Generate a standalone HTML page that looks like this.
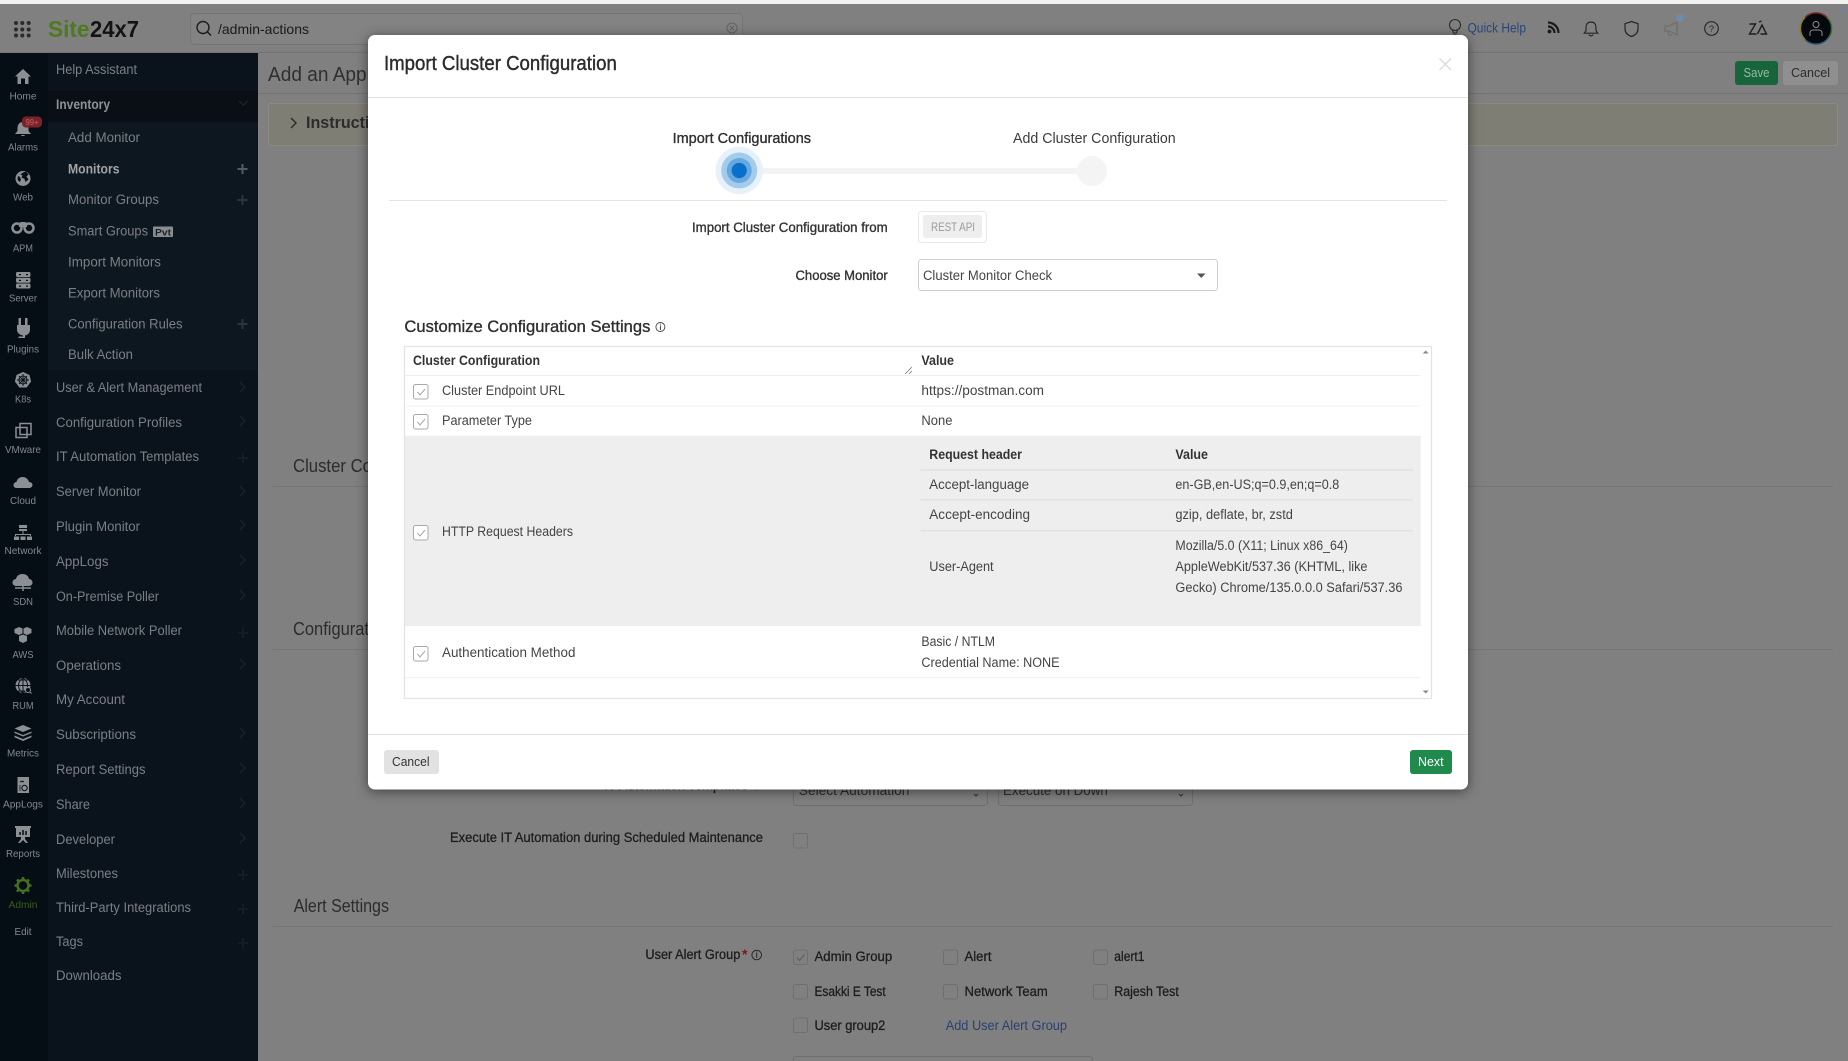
<!DOCTYPE html>
<html lang="en">
<head>
<meta charset="utf-8">
<title>Import Cluster Configuration</title>
<style>
html,body{margin:0;padding:0;width:1848px;height:1061px;overflow:hidden;background:#808080}
svg{display:block;position:absolute;left:0;top:0}
text{font-family:"Liberation Sans",sans-serif;white-space:pre}
.l{font-size:10.5px;fill:#84888b;text-anchor:middle}
.m{font-size:13.5px;fill:#7b7f83}
.mb{font-size:13.5px;fill:#a2a4a6;font-weight:bold}
.b{font-size:13.5px;fill:#1d1d1d;stroke:#1d1d1d;stroke-width:.3px}
.h{font-size:18px;fill:#2c2c2c}
.t{font-size:13.5px;fill:#444}
.tb{font-size:13.5px;fill:#333;font-weight:bold}
.tm{font-size:13.5px;fill:#333;stroke:#333;stroke-width:.35px}
.cb{fill:none;stroke:#6f6f6f;stroke-width:1}
.mcb{fill:#fff;stroke:#a9a9a9;stroke-width:1}
.ck{fill:none;stroke:#a5a5a5;stroke-width:1}
.ch{fill:none;stroke:#1b252e;stroke-width:1.2}
.pl{fill:none;stroke:#151c23;stroke-width:2}
.ic{fill:#8c9094}
.ics{fill:none;stroke:#8c9094;stroke-width:1.5}
.d{fill:none;stroke:#0a131c;stroke-width:1}
</style>
</head>
<body>
<svg width="1848" height="1061" viewBox="0 0 1848 1061" xmlns="http://www.w3.org/2000/svg">
<!-- page -->
<rect width="1848" height="1061" fill="#808080"/>
<rect width="1848" height="4" fill="#f2f2f2"/>
<rect y="52" x="0" width="1848" height="1" fill="#747474"/>

<!-- top bar -->
<g fill="#2b2b2b">
<circle cx="16" cy="23" r="2"/><circle cx="22.3" cy="23" r="2"/><circle cx="28.7" cy="23" r="2"/>
<circle cx="16" cy="29.5" r="2"/><circle cx="22.3" cy="29.5" r="2"/><circle cx="28.7" cy="29.5" r="2"/>
<circle cx="16" cy="35.5" r="2"/><circle cx="22.3" cy="35.5" r="2"/><circle cx="28.7" cy="35.5" r="2"/>
</g>
<text x="48" y="37" textLength="41.5" lengthAdjust="spacingAndGlyphs" style="font-size:23.5px;font-weight:bold;fill:#4d7a1f">Site</text>
<text x="90" y="37" textLength="49" lengthAdjust="spacingAndGlyphs" style="font-size:23.5px;font-weight:bold;fill:#131313">24x7</text>
<rect x="190.5" y="13.5" width="552" height="31" rx="4" fill="#838383" stroke="#747474"/>
<circle cx="203" cy="27.5" r="6" fill="none" stroke="#1d1d1d" stroke-width="1.4"/><path d="M207.5 32l3.5 3.5" stroke="#1d1d1d" stroke-width="1.5" fill="none"/>
<text x="218" y="34" textLength="91" lengthAdjust="spacingAndGlyphs" style="font-size:14px;fill:#1a1a1a">/admin-actions</text>
<circle cx="732" cy="28" r="5" fill="none" stroke="#646464"/><path d="M730 26l4 4M734 26l-4 4" stroke="#646464" fill="none"/>

<circle cx="1455" cy="25" r="5.5" fill="none" stroke="#2b2b2b" stroke-width="1.1"/><path d="M1452.5 30l1 3h3l1-3M1453.5 35h3" fill="none" stroke="#2b2b2b" stroke-width="1.1"/>
<text x="1467.5" y="32.5" textLength="58.5" lengthAdjust="spacingAndGlyphs" style="font-size:13.5px;fill:#2a4578">Quick Help</text>
<circle cx="1549.5" cy="31.5" r="1.9" fill="#1a1a1a"/><path d="M1548 26.5a6.500 6.500 0 0 1 6.500 6.500M1548 22.5a10.500 10.500 0 0 1 10.500 10.500" fill="none" stroke="#1a1a1a" stroke-width="2.2"/>
<path d="M1591 22c-3.600 0-5 2.600-5 5.600v3.200l-1.800 2.400h13.600l-1.800-2.400v-3.200c0-3-1.400-5.600-5-5.600zM1589 34.500c.5 1.800 3.500 1.800 4 0" fill="none" stroke="#262626" stroke-width="1.2"/>
<path d="M1631.500 21.500l6.500 2.200v5c0 4-2.800 6.500-6.500 7.800-3.700-1.300-6.500-3.800-6.500-7.800v-5z" fill="none" stroke="#262626" stroke-width="1.2"/>
<path d="M1665 26h4l8-4v13l-8-4h-4zM1668 31l1 4h3" fill="none" stroke="#6e6e6e" stroke-width="1.3"/>
<circle cx="1680" cy="18" r="4" fill="#6f8ba6"/>
<circle cx="1711.500" cy="28.500" r="6.800" fill="none" stroke="#2a2a2a" stroke-width="1.2"/>
<text x="1711.500" y="32" style="font-size:9.5px;fill:#2a2a2a;text-anchor:middle">?</text>
<path d="M1749.500 24h6l-6 10h7M1757.500 34l4.500-9 4.500 9h-6M1759 22l2.500-1" fill="none" stroke="#1e1e1e" stroke-width="1.4"/>
<circle cx="1816" cy="28.500" r="15.500" fill="#05090d"/>
<path d="M1805 17.500a15.500 15.500 0 0 1 22 0" fill="none" stroke="#7d2a2a" stroke-width="1.5"/>
<path d="M1827 17.500a15.500 15.500 0 0 1 0 22" fill="none" stroke="#3e6a3e" stroke-width="1.5"/>
<path d="M1827 39.500a15.500 15.500 0 0 1-22 0" fill="none" stroke="#2e5a85" stroke-width="1.5"/>
<path d="M1805 39.500a15.500 15.500 0 0 1 0-22" fill="none" stroke="#8a7a2a" stroke-width="1.5"/>
<circle cx="1816" cy="24.500" r="3" fill="none" stroke="#8f8f8f" stroke-width="1"/>
<path d="M1810 36v-3c0-2 1.500-3 3-3h6c1.500 0 3 1 3 3v3" fill="none" stroke="#8f8f8f" stroke-width="1"/>
<path d="M1842 8l3.500 4h-7z" fill="#6e84a4"/>

<!-- main content behind overlay -->
<rect x="258" y="93" width="1590" height="1" fill="#747474"/>
<text x="268" y="81" textLength="158" lengthAdjust="spacingAndGlyphs" style="font-size:20px;fill:#2f2f2f">Add an Application</text>
<rect x="1735" y="61" width="43" height="24" rx="3" fill="#17653a"/>
<text x="1743.500" y="77" textLength="26" lengthAdjust="spacingAndGlyphs" style="font-size:13px;fill:#98b9a6">Save</text>
<rect x="1783" y="61" width="55" height="24" rx="3" fill="#8f8f8f"/>
<text x="1791" y="77" textLength="39" lengthAdjust="spacingAndGlyphs" style="font-size:13px;fill:#2d2d2d">Cancel</text>
<rect x="268.500" y="103.500" width="1569" height="42" rx="3" fill="#7f7e75" stroke="#8b8b85"/>
<path d="M291 118l5 5-5 5" fill="none" stroke="#2a2a2a" stroke-width="1.4"/>
<text x="306" y="128" textLength="92" lengthAdjust="spacingAndGlyphs" style="font-size:16.5px;font-weight:bold;fill:#2c2c2c">Instructions</text>

<text x="293" y="472" textLength="157" lengthAdjust="spacingAndGlyphs" class="h">Cluster Configuration</text>
<rect x="273" y="486" width="1560" height="1" fill="#747474"/>
<text x="293" y="635" textLength="98" lengthAdjust="spacingAndGlyphs" class="h">Configuration</text>
<rect x="273" y="649" width="1560" height="1" fill="#747474"/>

<text x="604.400" y="790" textLength="143.600" lengthAdjust="spacingAndGlyphs" class="b">IT Automation Templates</text>
<circle cx="756.700" cy="786" r="4.500" class="cb"/>
<rect x="793.500" y="772" width="194" height="33.500" rx="3" class="cb"/>
<text x="798.800" y="795" textLength="110.600" lengthAdjust="spacingAndGlyphs" style="font-size:13.5px;fill:#2c2c2c">Select Automation</text>
<path d="M974 794l2 2 2-2" fill="none" stroke="#333" stroke-width="1"/>
<rect x="998.500" y="772" width="194" height="33.500" rx="3" class="cb"/>
<text x="1003" y="795" textLength="104.800" lengthAdjust="spacingAndGlyphs" style="font-size:13.5px;fill:#2c2c2c">Execute on Down</text>
<path d="M1179 794l2 2 2-2" fill="none" stroke="#333" stroke-width="1"/>

<text x="450" y="842" textLength="313" lengthAdjust="spacingAndGlyphs" class="b">Execute IT Automation during Scheduled Maintenance</text>
<rect x="793.500" y="833.500" width="14" height="14.500" rx="2" class="cb"/>

<text x="293.700" y="912" textLength="95.300" lengthAdjust="spacingAndGlyphs" class="h">Alert Settings</text>
<rect x="273" y="926" width="1560" height="1" fill="#747474"/>

<text x="645.400" y="959" textLength="94.900" lengthAdjust="spacingAndGlyphs" class="b">User Alert Group</text>
<text x="742" y="959" style="font-size:14px;font-weight:bold;fill:#7a1616">*</text>
<circle cx="756.700" cy="955" r="4.800" fill="none" stroke="#2a2a2a"/><path d="M756.700 953v5M756.700 951.500v1" stroke="#2a2a2a" fill="none"/>

<rect x="793.500" y="950" width="14" height="14.500" rx="2" class="cb"/><path d="M797 957.500l2.500 3 5-6" fill="none" stroke="#5c5c5c" stroke-width="1"/>
<text x="814.500" y="961" textLength="77.700" lengthAdjust="spacingAndGlyphs" class="b">Admin Group</text>
<rect x="943.500" y="950" width="14" height="14.500" rx="2" class="cb"/>
<text x="964.500" y="961" textLength="27" lengthAdjust="spacingAndGlyphs" class="b">Alert</text>
<rect x="1093.500" y="950" width="14" height="14.500" rx="2" class="cb"/>
<text x="1114.300" y="961" textLength="30.200" lengthAdjust="spacingAndGlyphs" class="b">alert1</text>

<rect x="793.500" y="984.500" width="14" height="14.500" rx="2" class="cb"/>
<text x="814.500" y="996" textLength="71.200" lengthAdjust="spacingAndGlyphs" class="b">Esakki E Test</text>
<rect x="943.500" y="984.500" width="14" height="14.500" rx="2" class="cb"/>
<text x="964.500" y="996" textLength="83.300" lengthAdjust="spacingAndGlyphs" class="b">Network Team</text>
<rect x="1093.500" y="984.500" width="14" height="14.500" rx="2" class="cb"/>
<text x="1114.300" y="996" textLength="64.500" lengthAdjust="spacingAndGlyphs" class="b">Rajesh Test</text>

<rect x="793.500" y="1018" width="14" height="14.500" rx="2" class="cb"/>
<text x="814.500" y="1030" textLength="70.800" lengthAdjust="spacingAndGlyphs" class="b">User group2</text>
<text x="945.700" y="1030" textLength="121.300" lengthAdjust="spacingAndGlyphs" style="font-size:13.5px;fill:#2a4070">Add User Alert Group</text>
<rect x="793.500" y="1056.500" width="299" height="30" rx="3" class="cb"/>

<!-- sidebar -->
<rect x="0" y="53" width="48" height="1008" fill="#050d15"/>
<rect x="48" y="53" width="210" height="1008" fill="#0a131c"/>
<rect x="48" y="91" width="210" height="31" fill="#0a0f15"/>
<rect x="48" y="122" width="210" height="248" fill="#0d1720"/>

<!-- sidebar icons -->
<path class="ic" d="M23 69l8 7.500h-2.500V84H25v-5.500h-4V84h-3.500v-7.500H15z"/>
<path class="ic" d="M23 122c-3.600 0-5.500 2.600-5.500 6v3l-2.500 3h16l-2.500-3v-3c0-3.400-1.900-6-5.500-6zM21 135c.5 1.500 3.500 1.500 4 0z"/>
<rect x="22" y="116.500" width="20" height="11" rx="4" fill="#7d2227"/>
<text x="32" y="125" textLength="13" lengthAdjust="spacingAndGlyphs" style="font-size:8px;fill:#b5686c;text-anchor:middle">99+</text>
<circle class="ic" cx="23" cy="178.500" r="7.500"/>
<path fill="#050d15" d="M23 172.500l3-1 2.500 3-2 2 2 3-3 2.500-1-3-3-1.500 1-2-2-1zM18 176l2 1 1 3-1.500 2-2-2.500z"/>
<circle cx="17" cy="228" r="4.500" fill="none" stroke="#8c9094" stroke-width="2.500"/><circle cx="29" cy="228" r="4.500" fill="none" stroke="#8c9094" stroke-width="2.500"/>
<path class="ic" d="M19 223l2-1h4l2 1v4h-8z"/>
<g class="ic"><rect x="16" y="272" width="14.500" height="5" rx="1.500"/><rect x="16" y="277.800" width="14.500" height="5" rx="1.500"/><rect x="16" y="283.500" width="14.500" height="5" rx="1.500"/></g>
<g fill="#050d15"><rect x="19" y="274" width="2" height="1.200"/><rect x="26" y="274" width="2" height="1.200"/><rect x="19" y="279.800" width="2" height="1.200"/><rect x="26" y="279.800" width="2" height="1.200"/><rect x="19" y="285.500" width="2" height="1.200"/><rect x="26" y="285.500" width="2" height="1.200"/></g>
<path class="ic" d="M18.500 318h2.500v7h4v-7h2.500v7H30v5c0 3-2.500 5-5 5.500V338h-6.500v-1.500H23v-1c-3-.5-6-2.500-6-5.500v-5h1.500z"/>
<path class="ic" d="M23 372l6.500 3 1.600 6.500-4.500 6h-7.200l-4.500-6 1.600-6.500z"/>
<circle cx="23" cy="380" r="4" class="d"/><path class="d" d="M23 374v12M17 380h12M19 376l8 8M27 376l-8 8"/>
<path class="ics" d="M20 423.500h11v11H20zM16 427.500h11v10H16z"/>
<path class="ic" d="M19.500 488h-3c-2 0-3-1.400-3-3s1.500-3 3-3c.5-3 3-5 6-5 3.500 0 6 2.500 6.500 5 2 0 3.500 1.300 3.500 3s-1.500 3-3.500 3z"/>
<path class="ic" d="M19 525h8v3h-8zM19 529h8v2h-8zM22.500 531h1v3h-1zM15 534h16v1H15zM15 535h1v1h-1zM30 535h1v1h-1zM14 536.500h5v3.500h-5zM20.500 536.500h5v3.500h-5zM27 536.500h5v3.500h-5z"/>
<path class="ic" d="M20 586h-4c-2 0-3.500-1.500-3.500-3.500s1.600-3.300 3.500-3.500c.5-3 3-5 6.500-5s6 2 6.500 5c2 .2 3.500 1.500 3.500 3.500s-1.500 3.500-3.500 3.500z"/>
<path class="ics" d="M23 586v5M15 588h16" stroke-width="1"/>
<path class="ic" d="M14.500 629l4.500-2 3.500 1.500v5l-3.500 1.500-4.500-2zM23.500 628.500l3.500-1.500 4.500 2v4l-4.500 2-3.500-1.500zM19 636l4-1.500 4 1.500v5l-4 2-4-2z"/>
<circle class="ic" cx="23" cy="685.500" r="7.500"/>
<path class="d" d="M15.500 685.500h15M23 678v15M18 680h10M18 691h10M23 678c-6 4-6 11 0 15M23 678c6 4 6 11 0 15"/>
<circle cx="28" cy="690" r="2.500" fill="#050d15" stroke="#8c9094"/><path d="M30 692l1.500 1.500" stroke="#8c9094"/>
<path class="ic" d="M23 725l8.500 3.500-8.500 3.500-8.500-3.500zM14.500 731.500l8.500 3.500 8.500-3.500v1.500l-8.500 3.500-8.500-3.500zM14.500 735.500l8.500 3.500 8.500-3.500v1.800l-8.500 3.700-8.500-3.700z"/>
<rect class="ic" x="17.500" y="777" width="11.500" height="16"/>
<circle cx="24.500" cy="788" r="2.700" fill="none" stroke="#050d15"/><path d="M19 786h2M19 788h2M19 790h2M20 781l1 1 1-1 1 1 1-1" fill="none" stroke="#050d15" stroke-width=".8"/>
<path class="ic" d="M15 826h16v2h-1v9h-5v2l3 4h-2l-3-3-3 3h-2l3-4v-2h-5v-9h-1z"/>
<path fill="none" stroke="#050d15" stroke-width="1.500" d="M20 835v-3M23 835v-5M26 835v-4"/>
<circle cx="23" cy="885.500" r="5.500" fill="none" stroke="#44701e" stroke-width="2.500"/>
<path fill="none" stroke="#44701e" stroke-width="2.600" d="M23 877v3.500M23 890.500v3.500M14.500 885.500H18M28 885.500h3.500M17 879.500l2.500 2.500M26.500 889l2.500 2.500M29 879.500L26.500 882M19.500 889L17 891.500"/>

<text class="l" x="23" y="99.300" textLength="27" lengthAdjust="spacingAndGlyphs">Home</text>
<text class="l" x="23" y="150.300" textLength="30" lengthAdjust="spacingAndGlyphs">Alarms</text>
<text class="l" x="23" y="200.300" textLength="20" lengthAdjust="spacingAndGlyphs">Web</text>
<text class="l" x="23" y="251.300" textLength="20" lengthAdjust="spacingAndGlyphs">APM</text>
<text class="l" x="23" y="301.300" textLength="28" lengthAdjust="spacingAndGlyphs">Server</text>
<text class="l" x="23" y="352.300" textLength="32" lengthAdjust="spacingAndGlyphs">Plugins</text>
<text class="l" x="23" y="402.300" textLength="16" lengthAdjust="spacingAndGlyphs">K8s</text>
<text class="l" x="23" y="453" textLength="36" lengthAdjust="spacingAndGlyphs">VMware</text>
<text class="l" x="23" y="504" textLength="26" lengthAdjust="spacingAndGlyphs">Cloud</text>
<text class="l" x="23" y="554" textLength="37" lengthAdjust="spacingAndGlyphs">Network</text>
<text class="l" x="23" y="605" textLength="20" lengthAdjust="spacingAndGlyphs">SDN</text>
<text class="l" x="23" y="658" textLength="21" lengthAdjust="spacingAndGlyphs">AWS</text>
<text class="l" x="23" y="709" textLength="21" lengthAdjust="spacingAndGlyphs">RUM</text>
<text class="l" x="23" y="756.500" textLength="32" lengthAdjust="spacingAndGlyphs">Metrics</text>
<text class="l" x="23" y="807.500" textLength="40" lengthAdjust="spacingAndGlyphs">AppLogs</text>
<text class="l" x="23" y="857" textLength="34" lengthAdjust="spacingAndGlyphs">Reports</text>
<text class="l" x="23" y="908" textLength="29" lengthAdjust="spacingAndGlyphs" style="fill:#3c5c1c">Admin</text>
<text class="l" x="23" y="935" textLength="17" lengthAdjust="spacingAndGlyphs">Edit</text>

<!-- sidebar menu -->
<text class="m" x="56" y="74" textLength="81" lengthAdjust="spacingAndGlyphs">Help Assistant</text>
<text class="mb" x="56" y="109" textLength="54" lengthAdjust="spacingAndGlyphs" style="fill:#8f9194">Inventory</text>
<text class="m" x="68" y="142" textLength="72" lengthAdjust="spacingAndGlyphs">Add Monitor</text>
<text class="mb" x="68" y="173.500" textLength="51.500" lengthAdjust="spacingAndGlyphs">Monitors</text>
<text class="m" x="68" y="204" textLength="91" lengthAdjust="spacingAndGlyphs">Monitor Groups</text>
<text class="m" x="68" y="235.500" textLength="80" lengthAdjust="spacingAndGlyphs">Smart Groups</text>
<rect x="153" y="226.500" width="20" height="10.500" rx="1" fill="#8a8d90"/>
<text x="155" y="235.500" textLength="16" lengthAdjust="spacingAndGlyphs" style="font-size:9.5px;font-weight:bold;fill:#1b2127">Pvt</text>
<text class="m" x="68" y="266.500" textLength="93" lengthAdjust="spacingAndGlyphs">Import Monitors</text>
<text class="m" x="68" y="297.500" textLength="92" lengthAdjust="spacingAndGlyphs">Export Monitors</text>
<text class="m" x="68" y="328.500" textLength="114.500" lengthAdjust="spacingAndGlyphs">Configuration Rules</text>
<text class="m" x="68" y="359" textLength="65" lengthAdjust="spacingAndGlyphs">Bulk Action</text>
<text class="m" x="56" y="392" textLength="146" lengthAdjust="spacingAndGlyphs">User &amp; Alert Management</text>
<text class="m" x="56" y="427" textLength="126" lengthAdjust="spacingAndGlyphs">Configuration Profiles</text>
<text class="m" x="56" y="461" textLength="143" lengthAdjust="spacingAndGlyphs">IT Automation Templates</text>
<text class="m" x="56" y="496" textLength="85" lengthAdjust="spacingAndGlyphs">Server Monitor</text>
<text class="m" x="56" y="531" textLength="84" lengthAdjust="spacingAndGlyphs">Plugin Monitor</text>
<text class="m" x="56" y="566" textLength="52.500" lengthAdjust="spacingAndGlyphs">AppLogs</text>
<text class="m" x="56" y="601" textLength="103" lengthAdjust="spacingAndGlyphs">On-Premise Poller</text>
<text class="m" x="56" y="635" textLength="126" lengthAdjust="spacingAndGlyphs">Mobile Network Poller</text>
<text class="m" x="56" y="670" textLength="65" lengthAdjust="spacingAndGlyphs">Operations</text>
<text class="m" x="56" y="704" textLength="69" lengthAdjust="spacingAndGlyphs">My Account</text>
<text class="m" x="56" y="739" textLength="80" lengthAdjust="spacingAndGlyphs">Subscriptions</text>
<text class="m" x="56" y="774" textLength="89.500" lengthAdjust="spacingAndGlyphs">Report Settings</text>
<text class="m" x="56" y="809" textLength="34" lengthAdjust="spacingAndGlyphs">Share</text>
<text class="m" x="56" y="844" textLength="59" lengthAdjust="spacingAndGlyphs">Developer</text>
<text class="m" x="56" y="878" textLength="62" lengthAdjust="spacingAndGlyphs">Milestones</text>
<text class="m" x="56" y="912" textLength="135" lengthAdjust="spacingAndGlyphs">Third-Party Integrations</text>
<text class="m" x="56" y="946" textLength="27" lengthAdjust="spacingAndGlyphs">Tags</text>
<text class="m" x="56" y="980" textLength="65.500" lengthAdjust="spacingAndGlyphs">Downloads</text>

<path class="ch" d="M239 101l4.500 4 4.500-4"/>
<path class="ch" d="M240 382l5 5-5 5M240 416l5 5-5 5M240 486l5 5-5 5M240 520l5 5-5 5M240 555l5 5-5 5M240 590l5 5-5 5M240 659l5 5-5 5M240 728l5 5-5 5M240 763l5 5-5 5M240 798l5 5-5 5M240 833l5 5-5 5"/>
<path d="M242.500 164v10M237.500 169h10" fill="none" stroke="#565b60" stroke-width="2"/>
<path d="M242.500 195v10M237.500 200h10M242.500 319v10M237.500 324h10" fill="none" stroke="#2c343a" stroke-width="2"/>
<path class="pl" d="M243 453v10M238 458h10M243 628v10M238 633h10M243 870v10M238 875h10M243 904v10M238 909h10M243 938v10M238 943h10"/>

<!-- modal -->
<rect x="368" y="35" width="1100" height="754.500" rx="7" fill="#fff" style="filter:drop-shadow(0 2px 6px rgba(0,0,0,.5))"/>
<text x="384" y="70" textLength="232.800" lengthAdjust="spacingAndGlyphs" style="font-size:20px;fill:#2c2c2c;stroke:#2c2c2c;stroke-width:.4px">Import Cluster Configuration</text>
<path d="M1439.500 58.500l11.500 11.500M1451 58.500l-11.500 11.500" stroke="#dcdcdc" stroke-width="1.500" fill="none"/>
<rect x="368" y="97" width="1100" height="1" fill="#e4e4e4"/>

<!-- stepper -->
<text x="672.600" y="143" textLength="138.400" lengthAdjust="spacingAndGlyphs" style="font-size:14.5px;fill:#2f2f2f;stroke:#2f2f2f;stroke-width:.35px">Import Configurations</text>
<text x="1013" y="143" textLength="162.700" lengthAdjust="spacingAndGlyphs" style="font-size:14.5px;fill:#3c3c3c">Add Cluster Configuration</text>
<rect x="750" y="168" width="345" height="6" fill="#f3f3f3"/>
<circle cx="1092" cy="171" r="15" fill="#f4f4f4"/>
<circle cx="739.200" cy="170.500" r="23.700" fill="#e7f1fa"/>
<circle cx="739.200" cy="170.500" r="18" fill="#a2cbec"/>
<circle cx="739.200" cy="170.500" r="12.500" fill="#66a8df"/>
<circle cx="739.200" cy="170.500" r="7.600" fill="#0a6fc9"/>
<rect x="389" y="200" width="1058" height="1" fill="#e4e4e4"/>

<!-- form -->
<text x="692" y="232" textLength="195.700" lengthAdjust="spacingAndGlyphs" class="tm">Import Cluster Configuration from</text>
<rect x="918.500" y="211.500" width="68" height="31" rx="3" fill="#fff" stroke="#e8e8e8"/>
<rect x="923" y="215" width="59" height="23" rx="3" fill="#eee"/>
<text x="931" y="231" textLength="44" lengthAdjust="spacingAndGlyphs" style="font-size:11.5px;fill:#9a9a9a">REST API</text>
<text x="795.500" y="280" textLength="92.200" lengthAdjust="spacingAndGlyphs" class="tm">Choose Monitor</text>
<rect x="918.500" y="259.500" width="299" height="31" rx="3" fill="#fff" stroke="#cfcfcf"/>
<text x="923" y="280" textLength="129" lengthAdjust="spacingAndGlyphs" class="t">Cluster Monitor Check</text>
<path d="M1197 273.500h8.500l-4.200 4.500z" fill="#555"/>

<text x="404.400" y="332" textLength="246" lengthAdjust="spacingAndGlyphs" style="font-size:17px;fill:#2f2f2f;stroke:#2f2f2f;stroke-width:.35px">Customize Configuration Settings</text>
<circle cx="660.400" cy="327" r="4.500" fill="none" stroke="#444" stroke-width=".9"/><path d="M660.400 325.500v4.500M660.400 323.800v1" stroke="#444" fill="none"/>

<!-- table -->
<rect x="404.500" y="346.500" width="1027" height="352" fill="#fff" stroke="#e3e3e3" stroke-width="1.2"/>
<rect x="405" y="435.700" width="1015.700" height="190.300" fill="#eee"/>
<rect x="405" y="375" width="1015.700" height="1" fill="#eeeeee"/>
<rect x="405" y="405.500" width="1015.700" height="1" fill="#f3f3f3"/>
<rect x="405" y="677" width="1015.700" height="1" fill="#f3f3f3"/>
<text x="413" y="365" textLength="127" lengthAdjust="spacingAndGlyphs" class="tb">Cluster Configuration</text>
<path d="M905 374l7-7M909 374l3-3" stroke="#777" stroke-width=".8" fill="none"/>
<text x="921.400" y="365" textLength="32.600" lengthAdjust="spacingAndGlyphs" class="tb">Value</text>
<path d="M1425.700 350.500l3 3h-6z" fill="#888"/><path d="M1425.700 693.500l3-3h-6z" fill="#888"/>

<rect x="413.500" y="384.500" width="14.500" height="14.500" rx="2" class="mcb"/><path class="ck" d="M417.500 392l2.500 3 5-6"/>
<text x="442" y="395" textLength="123" lengthAdjust="spacingAndGlyphs" class="t">Cluster Endpoint URL</text>
<text x="921.400" y="395" textLength="122.600" lengthAdjust="spacingAndGlyphs" class="t">https://postman.com</text>

<rect x="413.500" y="414.500" width="14.500" height="14.500" rx="2" class="mcb"/><path class="ck" d="M417.500 422l2.500 3 5-6"/>
<text x="442" y="425" textLength="90" lengthAdjust="spacingAndGlyphs" class="t">Parameter Type</text>
<text x="921.400" y="425" textLength="31.100" lengthAdjust="spacingAndGlyphs" class="t">None</text>

<rect x="413.500" y="525.500" width="14.500" height="14.500" rx="2" class="mcb"/><path class="ck" d="M417.500 533l2.500 3 5-6"/>
<text x="442" y="536" textLength="131" lengthAdjust="spacingAndGlyphs" class="t">HTTP Request Headers</text>

<text x="929.300" y="459" textLength="92.700" lengthAdjust="spacingAndGlyphs" class="tb">Request header</text>
<text x="1175.400" y="459" textLength="32.600" lengthAdjust="spacingAndGlyphs" class="tb">Value</text>
<rect x="920.700" y="469.500" width="492.200" height="1" fill="#dcdcdc"/>
<text x="929.300" y="489" textLength="99.700" lengthAdjust="spacingAndGlyphs" class="t">Accept-language</text>
<text x="1175.400" y="489" textLength="163.900" lengthAdjust="spacingAndGlyphs" class="t">en-GB,en-US;q=0.9,en;q=0.8</text>
<rect x="920.700" y="499.300" width="492.200" height="1" fill="#dcdcdc"/>
<text x="929.300" y="519" textLength="100.700" lengthAdjust="spacingAndGlyphs" class="t">Accept-encoding</text>
<text x="1175.400" y="519" textLength="117.500" lengthAdjust="spacingAndGlyphs" class="t">gzip, deflate, br, zstd</text>
<rect x="920.700" y="530.300" width="492.200" height="1" fill="#dcdcdc"/>
<text x="929.300" y="571" textLength="64.300" lengthAdjust="spacingAndGlyphs" class="t">User-Agent</text>
<text x="1175.400" y="550" textLength="172.500" lengthAdjust="spacingAndGlyphs" class="t">Mozilla/5.0 (X11; Linux x86_64)</text>
<text x="1175.400" y="571" textLength="192.100" lengthAdjust="spacingAndGlyphs" class="t">AppleWebKit/537.36 (KHTML, like</text>
<text x="1175.400" y="592" textLength="227.100" lengthAdjust="spacingAndGlyphs" class="t">Gecko) Chrome/135.0.0.0 Safari/537.36</text>

<rect x="413.500" y="646.500" width="14.500" height="14.500" rx="2" class="mcb"/><path class="ck" d="M417.500 654l2.500 3 5-6"/>
<text x="442" y="657" textLength="133.400" lengthAdjust="spacingAndGlyphs" class="t">Authentication Method</text>
<text x="921.400" y="646" textLength="73.600" lengthAdjust="spacingAndGlyphs" class="t">Basic / NTLM</text>
<text x="921.400" y="667" textLength="138.200" lengthAdjust="spacingAndGlyphs" class="t">Credential Name: NONE</text>

<!-- footer -->
<rect x="368" y="734" width="1100" height="1" fill="#e4e4e4"/>
<rect x="384" y="750" width="55" height="24" rx="3" fill="#e2e2e2"/>
<text x="392" y="766" textLength="37.500" lengthAdjust="spacingAndGlyphs" style="font-size:12.5px;fill:#333">Cancel</text>
<rect x="1410" y="750" width="42" height="24" rx="3" fill="#1f8a4c"/>
<text x="1418" y="766" textLength="25.600" lengthAdjust="spacingAndGlyphs" style="font-size:12.5px;fill:#fff">Next</text>
</svg>
</body>
</html>
